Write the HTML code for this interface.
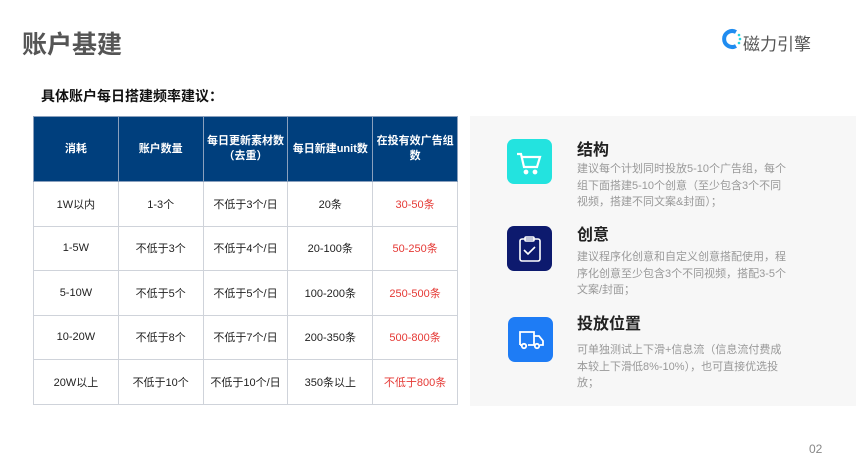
<!DOCTYPE html>
<html><head><meta charset="utf-8"><style>
*{margin:0;padding:0;box-sizing:border-box}
body{width:857px;height:466px;background:#fff;position:relative;overflow:hidden;font-family:"Liberation Sans","Noto Sans CJK SC",sans-serif}
.a{position:absolute}
h1{position:absolute;left:22px;top:25px;font-size:25px;font-weight:bold;color:#555;letter-spacing:0px}
.sub{left:41px;top:86px;font-size:14px;font-weight:bold;color:#111}
table{position:absolute;left:33px;top:116px;border-collapse:collapse;width:425px;table-layout:fixed}
td,th{border:1px solid #cfd3da;text-align:center;font-size:11px;color:#222}
th{background:#003f7d;color:#fff;height:65px;font-size:11px;border-color:#8aa0bd;line-height:15px}
td{height:44.5px}
.r{color:#e53935}
.panel{left:470px;top:116px;width:386px;height:290px;background:#f7f7f7}
.ic{position:absolute;width:45px;height:45px;border-radius:7px}
.t{position:absolute;left:577px;font-size:16px;font-weight:bold;color:#222}
.d{position:absolute;left:577px;width:212px;font-size:11px;line-height:16.5px;color:#999}
</style></head><body>
<h1>账户基建</h1>
<div class="a" style="left:722px;top:28px;width:20px;height:22px">
<svg width="20" height="22" viewBox="0 0 20 22"><path d="M14 4 A8 8 0 1 0 14 18" fill="none" stroke="#1f8cf0" stroke-width="4"/><circle cx="17" cy="7" r="1.3" fill="#27d3e0"/><circle cx="18" cy="11" r="1.3" fill="#27d3e0"/><circle cx="17" cy="15" r="1.3" fill="#27d3e0"/></svg></div>
<div class="a" style="left:743px;top:30px;font-size:17px;color:#555">磁力引擎</div>
<div class="a sub">具体账户每日搭建频率建议：</div>
<table>
<tr><th>消耗</th><th>账户数量</th><th>每日更新素材数<br>（去重）</th><th>每日新建unit数</th><th>在投有效广告组<br>数</th></tr>
<tr><td>1W以内</td><td>1-3个</td><td>不低于3个/日</td><td>20条</td><td class="r">30-50条</td></tr>
<tr><td>1-5W</td><td>不低于3个</td><td>不低于4个/日</td><td>20-100条</td><td class="r">50-250条</td></tr>
<tr><td>5-10W</td><td>不低于5个</td><td>不低于5个/日</td><td>100-200条</td><td class="r">250-500条</td></tr>
<tr><td>10-20W</td><td>不低于8个</td><td>不低于7个/日</td><td>200-350条</td><td class="r">500-800条</td></tr>
<tr><td>20W以上</td><td>不低于10个</td><td>不低于10个/日</td><td>350条以上</td><td class="r">不低于800条</td></tr>
</table>
<div class="a panel"></div>
<div class="ic" style="left:507px;top:139px;background:#23e3df"><svg width="45" height="45" viewBox="0 0 45 45" fill="none" stroke="#fff" stroke-width="2.2"><path d="M10 15h4l3 13h13l3-10H15"/><circle cx="19" cy="33" r="1.3" fill="#fff"/><circle cx="28" cy="33" r="1.3" fill="#fff"/></svg></div>
<div class="ic" style="left:507px;top:226px;background:#0d1a6e"><svg width="45" height="45" viewBox="0 0 45 45" fill="none" stroke="#fff" stroke-width="1.6"><rect x="13" y="13" width="20" height="22" rx="2"/><rect x="18" y="11" width="9" height="4" rx="1"/><path d="M17 24l4 4 7-7"/></svg></div>
<div class="ic" style="left:508px;top:317px;background:#1e7cf5"><svg width="45" height="45" viewBox="0 0 45 45" fill="none" stroke="#fff" stroke-width="1.8"><path d="M12 28V15h14v13M26 19h5l4 5v4h-3M12 28h2M20 28h6"/><circle cx="16" cy="29" r="2.2"/><circle cx="29" cy="29" r="2.2"/></svg></div>
<div class="t" style="top:136px">结构</div>
<div class="d" style="top:161px">建议每个计划同时投放5-10个广告组，每个组下面搭建5-10个创意（至少包含3个不同视频，搭建不同文案&amp;封面）；</div>
<div class="t" style="top:221px">创意</div>
<div class="d" style="top:249px">建议程序化创意和自定义创意搭配使用，程序化创意至少包含3个不同视频，搭配3-5个文案/封面；</div>
<div class="t" style="top:310px">投放位置</div>
<div class="d" style="top:342px">可单独测试上下滑+信息流（信息流付费成本较上下滑低8%-10%），也可直接优选投放；</div>
<div class="a" style="left:809px;top:442px;font-size:12px;color:#888">02</div>
</body></html>
